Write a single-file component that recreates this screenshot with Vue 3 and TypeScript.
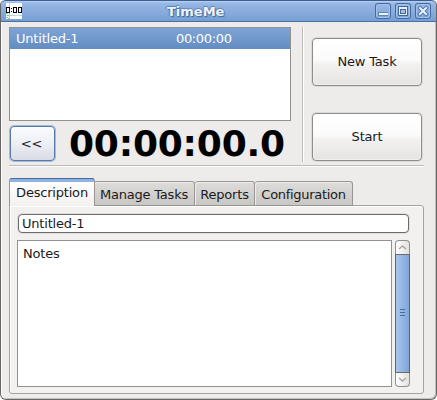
<script setup lang="ts">
import { ref } from 'vue'

interface Task {
  name: string
  elapsed: string
}

const tasks = ref<Task[]>([{ name: 'Untitled-1', elapsed: '00:00:00' }])
const selected = ref(0)
const tabs = ['Description', 'Manage Tasks', 'Reports', 'Configuration']
const activeTab = ref('Description')
const title = ref('Untitled-1')
const notes = ref('Notes')
</script>

<template>
  <div class="window">
    <header class="titlebar">
      <svg class="app-icon" width="16" height="16" viewBox="0 0 16 16" shape-rendering="crispEdges">
        <rect width="16" height="16" fill="#fff" />
        <path d="M3.5 0V16" stroke="#f3b5c4" />
        <path d="M0 12.5H16" stroke="#b8dce4" />
        <path d="M0 10.5h2M1 12.5h2M0 14.5h2M2 15.5h1" stroke="#7fc980" />
        <path d="M.5 4.5h3v5h-3zM7.5 4.5h3v5h-3zM12.5 4.5h3v5h-3z" fill="none" stroke="#000" />
        <path d="M5 5.5h1M5 8.5h1" stroke="#000" />
      </svg>
      <h1 class="title">TimeMe</h1>
      <div class="controls">
        <button class="control" aria-label="Minimize">
          <svg width="16" height="16" viewBox="0 0 16 16" shape-rendering="crispEdges">
            <rect x="3" y="9" width="10" height="4" fill="#5f86bd" />
            <rect x="4" y="10" width="9" height="2" fill="#eef4fc" />
          </svg>
        </button>
        <button class="control" aria-label="Maximize">
          <svg width="16" height="16" viewBox="0 0 16 16" shape-rendering="crispEdges">
            <rect x="3" y="3" width="10" height="10" fill="#44699f" />
            <rect x="4" y="4" width="8" height="8" fill="#e6effa" />
            <rect x="5" y="6" width="6" height="5" fill="#44699f" />
            <rect x="6" y="7" width="4" height="3" fill="#9fbfe8" />
          </svg>
        </button>
        <button class="control" aria-label="Close">
          <svg width="16" height="16" viewBox="0 0 16 16">
            <path d="M5 5l6 6M11 5l-6 6" stroke="#4d73aa" stroke-width="4" stroke-linecap="square" />
            <path d="M5 5l6 6M11 5l-6 6" stroke="#e6effa" stroke-width="2.2" stroke-linecap="square" />
          </svg>
        </button>
      </div>
    </header>

    <main class="content">
      <section class="top">
        <div class="left">
          <div class="task-list">
            <div
              v-for="(task, i) in tasks"
              :key="i"
              class="task"
              :class="{ selected: i === selected }"
              @click="selected = i"
            >
              <span class="task-name">{{ task.name }}</span>
              <span class="task-time">{{ task.elapsed }}</span>
            </div>
          </div>
          <div class="clock-row">
            <button class="button collapse">&lt;&lt;</button>
            <div class="clock">00:00:00.0</div>
          </div>
        </div>
        <div class="vrule"></div>
        <div class="actions">
          <button class="button">New Task</button>
          <button class="button">Start</button>
        </div>
      </section>
      <div class="hrule"></div>

      <nav class="tabs">
        <button
          v-for="tab in tabs"
          :key="tab"
          class="tab"
          :class="[{ active: tab === activeTab }, tab.split(' ')[0].toLowerCase()]"
          @click="activeTab = tab"
        >
          {{ tab }}
        </button>
      </nav>
      <section class="panel">
        <input v-model="title" class="entry" spellcheck="false" />
        <div class="notes-row">
          <textarea v-model="notes" class="notes" spellcheck="false"></textarea>
          <div class="scrollbar">
            <div class="step">
              <svg width="9" height="7" viewBox="0 0 9 7"><path d="M1 5l3.5-3L8 5" /></svg>
            </div>
            <div class="thumb">
              <svg width="5" height="7" viewBox="0 0 5 7" shape-rendering="crispEdges">
                <path d="M0 .5h5M0 3.5h5M0 6.5h5" />
              </svg>
            </div>
            <div class="step down">
              <svg width="9" height="7" viewBox="0 0 9 7"><path d="M1 2l3.5 3L8 2" /></svg>
            </div>
          </div>
        </div>
      </section>
    </main>
  </div>
</template>

<style>
body {
  background: #fff;
}
</style>

<style scoped>
.window,
.window * {
  box-sizing: border-box;
}
.window {
  width: 437px;
  height: 400px;
  display: flex;
  flex-direction: column;
  overflow: hidden;
  background: #edeceb;
  border: 1px solid #686765;
  border-top: 0;
  border-radius: 5px 5px 6px 6px;
  box-shadow: inset 1px 0 #fff, inset -1px -1px #c4c2c0;
  font: 13px/16px 'DejaVu Sans', sans-serif;
  letter-spacing: -0.2px;
  color: #1a1a1a;
}
button,
input,
textarea {
  margin: 0;
  padding: 0;
  font: inherit;
  letter-spacing: inherit;
  color: inherit;
  outline: none;
}
.titlebar {
  height: 22px;
  flex: none;
  display: flex;
  align-items: center;
  padding: 0 5px;
  border-top: 1px solid #3c5f92;
  border-bottom: 1px solid #4a6fa5;
  border-radius: 5px 5px 0 0;
  background: linear-gradient(#a9c5ec, #96b6e3 3px, #779fd3);
  box-shadow: inset 0 1px #b5cdf0;
}
.title {
  flex: 1;
  margin: 0;
  padding: 2px 0 0 145px;
  font-size: 13px;
  line-height: 16px;
  letter-spacing: 0;
  color: #edf3fc;
  text-shadow: 1px 1px 1px #3f659b, -1px 0 1px #5d82b7, 0 -1px 1px #5d82b7;
}
.controls {
  display: flex;
  gap: 4px;
}
.control {
  width: 16px;
  height: 16px;
  border: 0;
  border-radius: 3px;
  background: linear-gradient(#9bbae6, #7da4d8);
  box-shadow: inset 0 0 0 1px #44699f, inset 0 0 0 2px #a5c1e9;
}
.control svg {
  display: block;
}
.content {
  padding: 5px 12px 0 8px;
}
.top {
  height: 135px;
  display: flex;
}
.left {
  width: 282px;
}
.task-list {
  height: 94px;
  border: 1px solid #93918e;
  background: #fff;
}
.task {
  height: 21px;
  display: flex;
  padding: 3px 6px;
}
.task.selected {
  color: #fff;
  background: linear-gradient(#7ea4d6, #628dc1);
}
.task-name {
  width: 160px;
}
.task-time {
  letter-spacing: -0.35px;
}
.clock-row {
  display: flex;
  padding-top: 4px;
}
.button {
  border: 1px solid #8e8b88;
  border-radius: 4px;
  background: linear-gradient(#fff, #fbfbfb 45%, #f2f1f0 55%, #e5e4e2);
  box-shadow: inset 0 0 0 1px #fff6, 0 0 0 1px #dddbd9;
}
.collapse {
  width: 45px;
  height: 35px;
  margin: 1px 0 0 1px;
  padding-right: 2px;
  border-color: #5579a8;
  background: linear-gradient(#fafcff, #eceff4 50%, #d8dce3);
  box-shadow: 0 0 0 1px #a5bcdc;
}
.clock {
  margin-left: 14px;
  padding-top: 1px;
  font-size: 36px;
  line-height: 36px;
  font-weight: 700;
  color: #000;
  white-space: nowrap;
}
.vrule {
  width: 2px;
  margin-left: 11px;
  border-left: 1px solid #bdbbb8;
  background: #fff;
}
.actions {
  margin-left: 8px;
  padding-top: 11px;
}
.actions .button {
  display: block;
  width: 110px;
  height: 48px;
  margin-bottom: 27px;
}
.hrule {
  height: 2px;
  margin: 3px 0 12px;
  width: 415px;
  border-top: 1px solid #bdbbb8;
  background: #fff;
}
.tabs {
  height: 27px;
  display: flex;
  align-items: flex-end;
}
.tab {
  height: 25px;
  padding-top: 2px;
  border: 1px solid #999692;
  border-left: 0;
  border-radius: 3px 3px 0 0;
  background: linear-gradient(#dedcda, #c9c7c4);
  box-shadow: inset 1px 1px #eeedeb;
  white-space: nowrap;
}
.tab.description {
  width: 86px;
}
.tab.manage {
  width: 101px;
  margin-left: -1px;
}
.tab.reports {
  width: 60px;
}
.tab.configuration {
  width: 98px;
  letter-spacing: -0.3px;
}
.tab.active {
  height: 28px;
  flex: none;
  position: relative;
  padding: 1px 0 0;
  border: 1px solid #999692;
  border-top: 1px solid #446a9f;
  border-bottom: 0;
  background: linear-gradient(#91b3e2 0 3px, #fff 3px, #f2f1ef);
  box-shadow: none;
}
.panel {
  width: 415px;
  height: 189px;
  margin-top: -1px;
  padding: 8px 0 0 7px;
  border: 1px solid #a5a29f;
  border-radius: 0 3px 3px 3px;
  background: #f2f1ef;
  box-shadow: inset 1px 1px #fff;
}
.entry {
  display: block;
  width: 391px;
  height: 19px;
  margin-left: 1px;
  padding-left: 3px;
  border: 1px solid #6d6a67;
  border-radius: 4px;
  background: #fff;
  box-shadow: 0 0 0 1px #e2e0de;
}
.notes-row {
  display: flex;
  gap: 3px;
  margin-top: 7px;
}
.notes {
  width: 375px;
  height: 147px;
  padding: 5px;
  border: 1px solid #93918e;
  border-radius: 0;
  background: #fff;
  resize: none;
  overflow: hidden;
}
.scrollbar {
  width: 15px;
  height: 147px;
  display: flex;
  flex-direction: column;
}
.step,
.thumb {
  display: flex;
  align-items: center;
  justify-content: center;
  border: 1px solid #93918e;
}
.step {
  height: 14px;
  border-bottom: 0;
  border-radius: 4px 4px 0 0;
  background: linear-gradient(90deg, #fff, #e3e1df);
}
.step.down {
  border-top: 0;
  border-bottom: 1px solid #93918e;
  border-radius: 0 0 4px 4px;
}
.step path {
  fill: none;
  stroke: #aaa7a4;
  stroke-width: 1.5;
}
.thumb {
  flex: 1;
  padding-bottom: 2px;
  border-color: #6d6a67 #446a9f;
  background: linear-gradient(90deg, #a9c6ec, #7fa5d8);
}
.thumb path {
  stroke: #446a9f;
}
</style>
